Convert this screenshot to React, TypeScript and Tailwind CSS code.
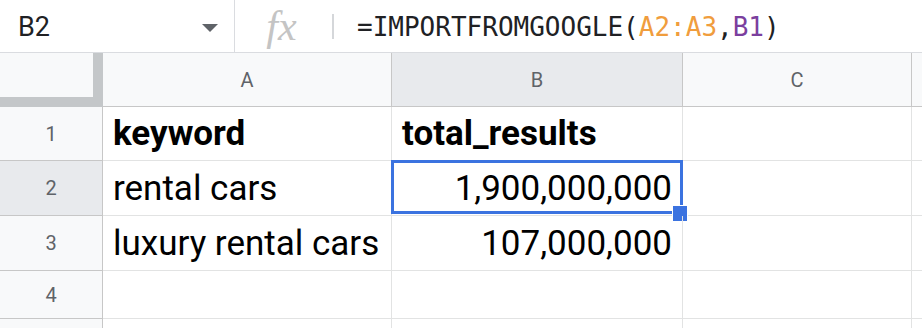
import React from "react";

const cellFont = { fontFamily: "Roboto, 'Noto Sans', sans-serif" };

const rows = [
    { n: "1", h: "h-[54px]", a: "keyword", b: "total_results", bold: true },
    { n: "2", h: "h-[55px]", a: "rental cars", b: "1,900,000,000", selected: true },
    { n: "3", h: "h-[55px]", a: "luxury rental cars", b: "107,000,000" },
    { n: "4", h: "h-[48px]", a: "", b: "" },
    { n: "", h: "h-[40px]", a: "", b: "" },
];

export default function App() {
    return (
        <div className="w-[922px] h-[328px] overflow-hidden bg-white text-black" style={cellFont}>
            {/* Formula bar */}
            <div className="flex items-center h-[53px] border-b border-[#dadce0]">
                <div className="flex items-center w-[234px] h-full pl-[18px] pr-[16px]">
                    <span className="text-[27px] leading-none text-[#202124] pt-[2px]">B2</span>
                    <span className="ml-auto mt-[4px] w-0 h-0 border-l-[8px] border-r-[8px] border-t-[8px] border-l-transparent border-r-transparent border-t-[#5f6368]" />
                </div>
                <div className="w-px h-full bg-[#dadce0]" />
                <div className="w-[97px] h-full flex items-center justify-center">
                    <span
                        className="text-[42px] italic leading-[52px] text-[#c4c4c4] pr-[4px]"
                        style={{ fontFamily: "'Liberation Serif', 'DejaVu Serif', serif" }}
                    >
                        fx
                    </span>
                </div>
                <div className="w-[2px] h-[25px] bg-[#d5d7da]" />
                <div
                    className="pl-[23px] text-[26px] leading-none text-[#202124] pt-[2px] whitespace-nowrap"
                    style={{ fontFamily: "'DejaVu Sans Mono', 'Liberation Mono', monospace" }}
                >
                    =IMPORTFROMGOOGLE(<span className="text-[#f09d3d]">A2:A3</span>,<span className="text-[#7b3f9e]">B1</span>)
                </div>
            </div>

            {/* Column headers */}
            <div className="flex h-[54px] text-[20px] text-[#5f6368]">
                <div className="w-[103px] h-full bg-[#f8f9fa] border-r-[10px] border-b-[10px] border-[#c4c7c9]" />
                <div className="w-[289px] h-full flex items-center justify-center bg-[#f8f9fa] border-r border-b border-[#c7c7c7]">A</div>
                <div className="w-[291px] h-full flex items-center justify-center bg-[#e8eaed] border-r border-b border-[#c7c7c7]">B</div>
                <div className="w-[229px] h-full flex items-center justify-center bg-[#f8f9fa] border-r border-b border-[#c7c7c7]">C</div>
                <div className="flex-1 h-full bg-[#f8f9fa] border-b border-[#c7c7c7]" />
            </div>

            {/* Rows */}
            {rows.map((r, i) => (
                <div key={i} className={`flex ${r.h}`}>
                    <div
                        className={`w-[103px] h-full flex items-center justify-center text-[20px] text-[#5f6368] border-r border-b border-[#c7c7c7] ${r.selected ? "bg-[#e8eaed]" : "bg-[#f8f9fa]"}`}
                    >
                        {r.n}
                    </div>
                    <div
                        className={`w-[289px] h-full flex items-end pb-[9px] pl-[10px] text-[35px] leading-none whitespace-nowrap border-r border-b border-[#e2e3e3] ${r.bold ? "font-bold" : ""}`}
                    >
                        {r.a}
                    </div>
                    <div
                        className={`relative w-[291px] h-full flex items-end pb-[9px] px-[10px] text-[35px] leading-none whitespace-nowrap border-r border-b border-[#e2e3e3] ${r.bold ? "font-bold justify-start" : "justify-end"}`}
                    >
                        {r.b}
                        {r.selected && (
                            <>
                                <div className="absolute -left-px -top-px right-[-1px] bottom-[1px] border-[3px] border-[#3b73e0]" />
                                <div className="absolute right-[-6px] bottom-[-7px] w-[16px] h-[17px] bg-[#3b73e0] border border-white" />
                            </>
                        )}
                    </div>
                    <div className="w-[229px] h-full border-r border-b border-[#e2e3e3]" />
                    <div className="flex-1 h-full border-b border-[#e2e3e3]" />
                </div>
            ))}
        </div>
    );
}
